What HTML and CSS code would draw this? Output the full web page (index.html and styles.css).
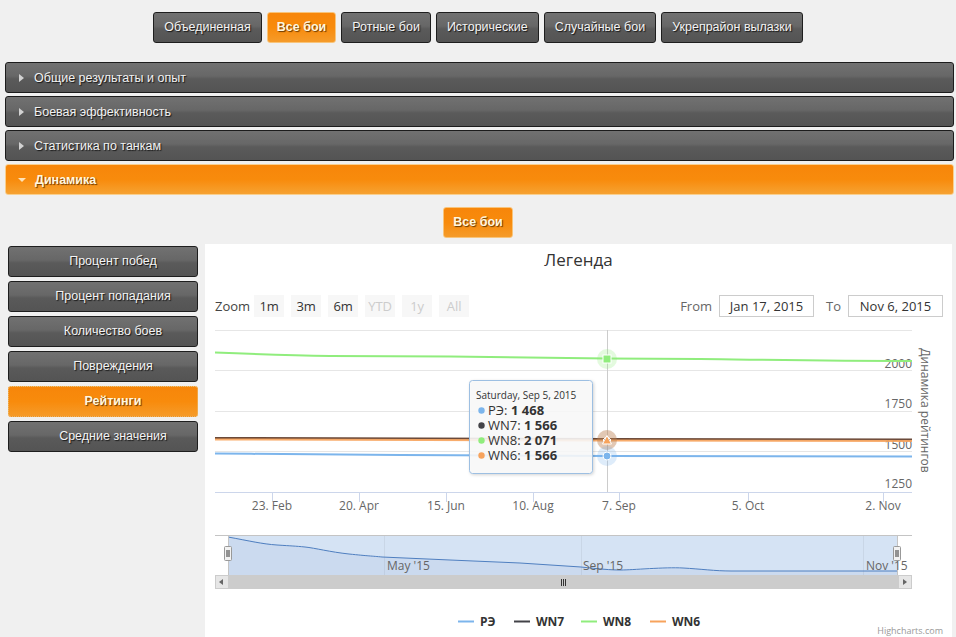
FILE: index.html
```html
<!DOCTYPE html>
<html lang="ru">
<head>
<meta charset="utf-8">
<title>Динамика</title>
<link rel="stylesheet" href="styles.css">
</head>
<body>
<div class="tabs">
  <div class="btn">Объединенная</div>
  <div class="btn btn-on">Все бои</div>
  <div class="btn">Ротные бои</div>
  <div class="btn">Исторические</div>
  <div class="btn">Случайные бои</div>
  <div class="btn">Укрепрайон вылазки</div>
</div>

<div class="accordion">
  <div class="acc-head"><span class="tri-right"></span>Общие результаты и опыт</div>
  <div class="acc-head"><span class="tri-right"></span>Боевая эффективность</div>
  <div class="acc-head"><span class="tri-right"></span>Статистика по танкам</div>
  <div class="acc-head acc-open"><span class="tri-down"></span>Динамика</div>
</div>

<div class="sub">
  <div class="btn btn-on">Все бои</div>
</div>

<div class="main">
  <div class="menu">
    <div class="mitem">Процент побед</div>
    <div class="mitem">Процент попадания</div>
    <div class="mitem">Количество боев</div>
    <div class="mitem">Повреждения</div>
    <div class="mitem mitem-on">Рейтинги</div>
    <div class="mitem">Средние значения</div>
  </div>

  <div class="chart">
    <div class="chart-title">Легенда</div>
    <div class="range">
      <div class="zoom">
        <span class="zlabel">Zoom</span>
        <span class="rbtn">1m</span>
        <span class="rbtn">3m</span>
        <span class="rbtn">6m</span>
        <span class="rbtn off">YTD</span>
        <span class="rbtn off">1y</span>
        <span class="rbtn off">All</span>
      </div>
      <div class="dates">
        <span class="dlabel">From</span><span class="dbox">Jan 17, 2015</span>
        <span class="dlabel to">To</span><span class="dbox">Nov 6, 2015</span>
      </div>
    </div>

    <svg class="plot" width="747" height="320" viewBox="205 317 747 320" xmlns="http://www.w3.org/2000/svg">
      <defs>
        <filter id="tsh" x="-10%" y="-10%" width="130%" height="130%">
          <feDropShadow dx="1" dy="1" stdDeviation="1.5" flood-color="#000" flood-opacity="0.18"/>
        </filter>
      </defs>

      <!-- grid -->
      <path d="M215 330.5H912M215 370.5H912M215 411.5H912M215 451.5H912" stroke="#e6e6e6" fill="none"/>
      <path d="M215 492.5H912" stroke="#ccd6eb"/>
      <path d="M272.5 492V502M359.5 492V502M446.5 492V502M533.5 492V502M619.5 492V502M748.5 492V502M883.5 492V502" stroke="#ccd6eb"/>

      <!-- x labels -->
      <g class="axis-lbl" text-anchor="middle">
        <text x="272" y="510">23. Feb</text>
        <text x="359" y="510">20. Apr</text>
        <text x="446" y="510">15. Jun</text>
        <text x="533" y="510">10. Aug</text>
        <text x="619" y="510">7. Sep</text>
        <text x="748" y="510">5. Oct</text>
        <text x="883" y="510">2. Nov</text>
      </g>
      <!-- y labels -->
      <g class="axis-lbl" text-anchor="end">
        <text x="912" y="368">2000</text>
        <text x="912" y="408">1750</text>
        <text x="912" y="449">1500</text>
        <text x="912" y="488">1250</text>
      </g>
      <text class="axis-lbl" text-anchor="middle" transform="translate(921 410.5) rotate(90)">Динамика рейтингов</text>

      <!-- crosshair -->
      <path d="M607.5 330V492" stroke="#cccccc"/>

      <!-- series -->
      <path d="M215 453.5C270 454 310 454.5 400 455L607 456L912 456.5" stroke="#7cb5ec" stroke-width="2" fill="none"/>
      <path d="M215 438L607 439L912 439.5" stroke="#6b4a3a" stroke-width="2" fill="none"/>
      <path d="M215 352.5C250 354 285 355.5 330 356L450 356.5L607 358.5L700 359C780 360 830 361 912 361" stroke="#90ed7d" stroke-width="2" fill="none"/>
      <path d="M215 439.5L607 440.5L912 441" stroke="#f7a35c" stroke-width="2" fill="none" opacity="0.9"/>

      <!-- hover markers -->
      <circle cx="607" cy="359" r="10" fill="#90ed7d" opacity="0.25"/>
      <rect x="603" y="355" width="8" height="8" fill="#90ed7d" stroke="#fff"/>
      <circle cx="607" cy="440" r="10" fill="#434348" opacity="0.2"/>
      <circle cx="607" cy="440" r="10" fill="#f7a35c" opacity="0.3"/>
      <path d="M607 436L611 440L607 444L603 440Z" fill="#434348" stroke="#fff"/>
      <path d="M607 435.5L611.5 444L602.5 444Z" fill="#f7a35c" stroke="#fff"/>
      <circle cx="607" cy="456" r="10" fill="#7cb5ec" opacity="0.25"/>
      <circle cx="607" cy="456" r="4" fill="#7cb5ec" stroke="#fff"/>

      <!-- tooltip -->
      <rect x="469.5" y="380.5" width="123" height="93" rx="3" fill="rgba(249,249,249,0.88)" stroke="#9dbfe2" filter="url(#tsh)"/>
      <text class="tip-date" x="476" y="399">Saturday, Sep 5, 2015</text>
      <circle cx="481.5" cy="410.5" r="3.2" fill="#7cb5ec"/>
      <circle cx="481.5" cy="425.5" r="3.2" fill="#434348"/>
      <circle cx="481.5" cy="440.5" r="3.2" fill="#90ed7d"/>
      <circle cx="481.5" cy="455.5" r="3.2" fill="#f7a35c"/>
      <text class="tip-row" x="488" y="414.5">РЭ:</text>
      <text class="tip-row b" x="511" y="414.5">1 468</text>
      <text class="tip-row" x="488" y="429.5">WN7:</text>
      <text class="tip-row b" x="524" y="429.5">1 566</text>
      <text class="tip-row" x="488" y="444.5">WN8:</text>
      <text class="tip-row b" x="524" y="444.5">2 071</text>
      <text class="tip-row" x="488" y="459.5">WN6:</text>
      <text class="tip-row b" x="524" y="459.5">1 566</text>

      <!-- navigator -->
      <rect x="228" y="535" width="670" height="40" fill="#d5e3f4"/>
      <path d="M384.5 535V575M581.5 535V575M863.5 535V575" stroke="#c9d6e6"/>
      <path d="M228 537L277 545L305 547L349 554L382 557L450 560L520 563L581 567L621 570L650 570L683 568L731 571L898 571V575H228Z" fill="rgba(51,92,173,0.06)"/>
      <path d="M228 537C250 541 262 544 277 545S295 546 305 547S330 552 349 554S372 556 382 557L450 560L520 563L581 567C600 569 610 570 621 570S665 567 683 568S715 571 731 571L898 571" stroke="#4f7fc0" stroke-width="1" fill="none"/>
      <path d="M215 535.5H912M228.5 535V575M897.5 535V575" stroke="#c4c4c4" fill="none"/>
      <g class="nav-lbl">
        <text x="387" y="570">May '15</text>
        <text x="583" y="570">Sep '15</text>
        <text x="866" y="570">Nov '15</text>
      </g>
      <!-- handles -->
      <rect x="224.5" y="546.5" width="7" height="14" rx="1" fill="#f2f2f2" stroke="#999"/>
      <path d="M227 550V557M229 550V557" stroke="#333"/>
      <rect x="893.5" y="546.5" width="7" height="14" rx="1" fill="#f2f2f2" stroke="#999"/>
      <path d="M896 550V557M898 550V557" stroke="#333"/>

      <!-- scrollbar -->
      <rect x="215" y="575" width="697" height="14" fill="#f2f2f2"/>
      <rect x="215.5" y="575.5" width="13" height="13" fill="#e6e6e6" stroke="#ccc"/>
      <path d="M223 579L219 582L223 585Z" fill="#666"/>
      <rect x="898.5" y="575.5" width="13" height="13" fill="#e6e6e6" stroke="#ccc"/>
      <path d="M903 579L907 582L903 585Z" fill="#666"/>
      <rect x="229" y="575" width="669" height="14" fill="#cccccc"/>
      <path d="M561.5 579V586M563.5 579V586M565.5 579V586" stroke="#333"/>

      <!-- legend -->
      <g stroke-width="2">
        <path d="M458 621.5H474" stroke="#7cb5ec"/>
        <path d="M514 621.5H530" stroke="#434348"/>
        <path d="M581 621.5H597" stroke="#90ed7d"/>
        <path d="M650 621.5H666" stroke="#f7a35c"/>
      </g>
      <g class="leg">
        <text x="480" y="626">РЭ</text>
        <text x="536" y="626">WN7</text>
        <text x="603" y="626">WN8</text>
        <text x="672" y="626">WN6</text>
      </g>
      <text class="credits" x="943" y="634" text-anchor="end">Highcharts.com</text>
    </svg>
  </div>
</div>
</body>
</html>
```

FILE: styles.css
```css
html, body {
  margin: 0;
  height: 100%;
  overflow: hidden;
}

body {
  background: #f0f0f0;
  font-family: "Liberation Sans", Arial, sans-serif;
  font-size: 12.5px;
}

/* dark / orange buttons */
.btn {
  height: 31px;
  box-sizing: border-box;
  padding: 0 10px;
  border: 1px solid #1e1e1e;
  border-radius: 3px;
  background: linear-gradient(to bottom, #717171 0%, #676767 45%, #5a5a5a 55%, #545454 100%);
  color: #f4f4f4;
  font-size: 12.5px;
  line-height: 29px;
  text-shadow: 1px 1px 1px #151515;
  white-space: nowrap;
}

.btn-on {
  padding: 0 9px;
  border-color: #f8c47a;
  background: linear-gradient(to bottom, #f7860a 0%, #f88b0c 50%, #f59b2a 100%);
  color: #fff7df;
  font-weight: bold;
  text-shadow: 1px 1px 1px #6a3800;
}

.tabs {
  display: flex;
  justify-content: center;
  gap: 5px;
  padding-top: 12px;
}

/* accordion */
.accordion {
  margin: 19px 2px 0 5px;
}

.acc-head {
  display: flex;
  align-items: center;
  height: 31px;
  box-sizing: border-box;
  margin-bottom: 3px;
  padding-left: 13px;
  border: 1px solid #1c1c1c;
  border-radius: 3px;
  background: linear-gradient(to bottom, #717171 0%, #676767 45%, #5a5a5a 55%, #545454 100%);
  color: #f2f2f2;
  font-size: 12.5px;
  text-shadow: 1px 1px 1px #151515;
}

.acc-open {
  margin-bottom: 0;
  border-color: #f9cf8e;
  background: linear-gradient(to bottom, #f7860a 0%, #f88b0c 50%, #f6a232 100%);
  color: #fff7df;
  font-weight: bold;
  text-shadow: 1px 1px 1px #6a3800;
}

.tri-right {
  width: 0;
  height: 0;
  border-left: 5px solid #d2d2d2;
  border-top: 4px solid transparent;
  border-bottom: 4px solid transparent;
  margin-right: 10px;
}

.tri-down {
  width: 0;
  height: 0;
  border-top: 4px solid #fde2b8;
  border-left: 4px solid transparent;
  border-right: 4px solid transparent;
  margin-right: 9px;
  margin-left: -1px;
}

.sub {
  display: flex;
  justify-content: center;
  margin-top: 12px;
}

/* main area */
.main {
  display: flex;
  gap: 7px;
  margin-top: 6px;
  padding-left: 8px;
}

.menu {
  width: 190px;
  margin-top: 2px;
  flex: none;
}

.mitem {
  height: 31px;
  box-sizing: border-box;
  margin-bottom: 4px;
  padding-left: 20px;
  border: 1px solid #1e1e1e;
  border-radius: 3px;
  background: linear-gradient(to bottom, #717171 0%, #676767 45%, #5a5a5a 55%, #545454 100%);
  color: #f4f4f4;
  font-size: 12.5px;
  line-height: 29px;
  text-align: center;
  text-shadow: 1px 1px 1px #151515;
}

.mitem-on {
  border: 1px dotted #e9c27c;
  background: linear-gradient(to bottom, #f7860a 0%, #f88b0c 50%, #f59b2a 100%);
  color: #fff7df;
  font-weight: bold;
  text-shadow: 1px 1px 1px #6a3800;
}

/* chart */
.chart {
  width: 747px;
  height: 393px;
  flex: none;
  background: #fff;
  overflow: hidden;
  font-family: "Open Sans", "DejaVu Sans", sans-serif;
}

.chart-title {
  height: 32px;
  line-height: 32px;
  text-align: center;
  font-size: 17px;
  color: #333;
}

.range {
  display: flex;
  justify-content: space-between;
  align-items: center;
  height: 22px;
  margin-top: 19px;
  padding: 0 9px 0 10px;
  font-size: 13px;
}

.zoom {
  display: flex;
  align-items: center;
  gap: 7px;
}

.zlabel {
  color: #444;
  margin-right: -3px;
}

.rbtn {
  width: 30px;
  height: 22px;
  line-height: 22px;
  text-align: center;
  background: #f7f7f7;
  color: #333;
}

.rbtn.off {
  color: #cccccc;
}

.dates {
  display: flex;
  align-items: center;
}

.dlabel {
  color: #666;
  margin-right: 7px;
}

.dlabel.to {
  margin-left: 12px;
}

.dbox {
  width: 95px;
  height: 22px;
  box-sizing: border-box;
  border: 1px solid #cccccc;
  line-height: 20px;
  text-align: center;
  color: #333;
}

.plot {
  display: block;
}

.plot text {
  font-family: "Open Sans", "DejaVu Sans", sans-serif;
}

.axis-lbl {
  font-size: 12px;
  fill: #666;
}

.nav-lbl {
  font-size: 12px;
  fill: #666;
}

.tip-date {
  font-size: 10px;
  fill: #333;
}

.tip-row {
  font-size: 13px;
  fill: #333;
}

.tip-row.b {
  font-weight: bold;
}

.leg {
  font-size: 12px;
  font-weight: bold;
  fill: #333;
}

.credits {
  font-size: 9px;
  fill: #999;
}
```
